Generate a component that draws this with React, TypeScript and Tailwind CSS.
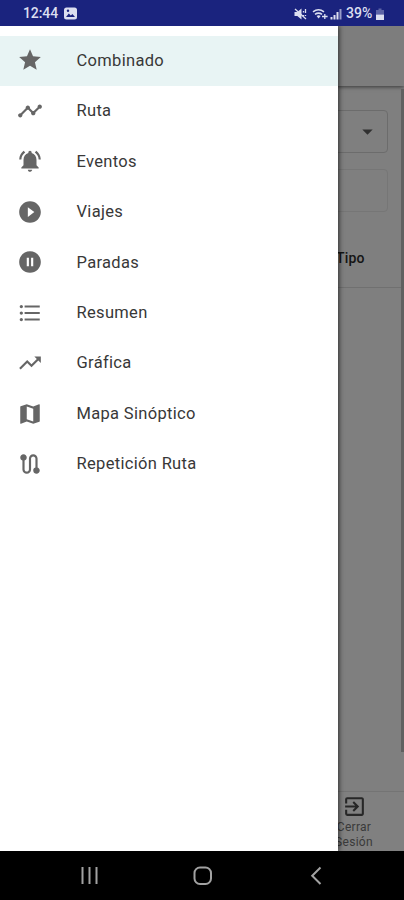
import type { IconType } from "react-icons";
import {
  MdArrowDropDown,
  MdExitToApp,
  MdFormatListBulleted,
  MdMap,
  MdNotificationsActive,
  MdPauseCircleFilled,
  MdPlayCircleFilled,
  MdRoute,
  MdStar,
  MdTimeline,
  MdTrendingUp
} from "react-icons/md";
import clsx from "clsx";

const MENU_ITEMS: { label: string; icon: IconType; selected?: boolean }[] = [
  { label: "Combinado", icon: MdStar, selected: true },
  { label: "Ruta", icon: MdTimeline },
  { label: "Eventos", icon: MdNotificationsActive },
  { label: "Viajes", icon: MdPlayCircleFilled },
  { label: "Paradas", icon: MdPauseCircleFilled },
  { label: "Resumen", icon: MdFormatListBulleted },
  { label: "Gráfica", icon: MdTrendingUp },
  { label: "Mapa Sinóptico", icon: MdMap },
  { label: "Repetición Ruta", icon: MdRoute }
];

function StatusBar() {
  return (
    <header className="flex h-[26px] shrink-0 items-center bg-[#1a237e] pt-px pr-[20.5px] pl-[23px] text-[14px] font-medium text-[#dcdff0]">
      <span className="tracking-[-0.1px]">12:44</span>
      <svg className="ml-[6px] h-[13px] w-[13px]" viewBox="0 0 13 13">
        <rect width="13" height="12" y="0.5" rx="2.5" fill="currentColor" />
        <path d="M2 10l2.8-3.6 2 2.2 1.6-1.5L11 10z" fill="#1a237e" />
        <circle cx="4" cy="3.8" r="1.2" fill="#1a237e" />
      </svg>
      <div className="ml-auto flex items-center">
        <svg className="h-[14px] w-[13px]" viewBox="0 0 13 14">
          <path d="M0.5 5h2.8L7.5 1.5v11L3.3 9H0.5z" fill="currentColor" />
          <path d="M1 2l11 10M9.5 4v1.5M11.5 2v4M9.5 8v1M11.5 8v1" fill="none" stroke="currentColor" strokeWidth="1.3" />
        </svg>
        <svg className="ml-[5px] h-[14px] w-[16px]" viewBox="0 0 16 14">
          <path d="M1 4.8q5.5-4 11 0M3 7.4q3.5-2.6 7 0" fill="none" stroke="currentColor" strokeWidth="1.6" />
          <path d="M4.6 9q2-1.3 4 0L6.6 11.6z" fill="currentColor" />
          <path d="M10 9.5h5.6M12.8 7v5" stroke="currentColor" strokeWidth="1.3" />
        </svg>
        <svg className="ml-[2px] h-[12px] w-[12px]" viewBox="0 0 12 12">
          <path d="M0.5 9h2v2.5h-2zM3.5 7h2v4.5h-2zM6.5 4h2v7.5h-2z" fill="currentColor" />
          <path d="M9.5 1h2v10.5h-2z" fill="currentColor" opacity="0.65" />
        </svg>
        <span className="ml-[4px] tracking-[0.1px]">39%</span>
        <svg className="ml-[3px] h-[12px] w-[8px]" viewBox="0 0 8 12">
          <path d="M2.5 0.5h3V2H8v4.5H0V2h2.5z" fill="currentColor" opacity="0.35" />
          <path d="M0 6.5h8V12H0z" fill="currentColor" />
        </svg>
      </div>
    </header>
  );
}

function ReportPage() {
  return (
    <div className="flex h-full flex-col bg-[#7f7f7f]">
      <div className="h-[60px] shrink-0 bg-[#7d7d7d] shadow-[0_1px_4px_rgba(0,0,0,0.55)]" />
      <div className="flex min-h-0 flex-1">
        <div className="flex-1">
          <div className="mt-[24px] mr-[13px] ml-4 flex h-[43px] items-center justify-end rounded-[4px] border border-[#6c6c6c] pr-[7px]">
            <MdArrowDropDown className="h-[25px] w-[25px] text-[#303030]" />
          </div>
          <div className="mt-[16px] mr-[13px] ml-4 h-[43px] rounded-[4px] border border-[#767676]" />
          <div className="flex h-[76px] items-center border-b border-[#707070] pt-[17px] pl-[336px] text-[14px] font-medium tracking-[0.2px] text-[#141414]">
            Tipo
          </div>
        </div>
        <div className="w-[3px] pt-[3px]">
          <div className="h-[663px] bg-[#606060]" />
        </div>
      </div>
      <div className="flex h-[60px] shrink-0 justify-end border-t border-[#747474] bg-[#808080]">
        <div className="flex w-[100px] flex-col items-center pt-[2px] text-center text-[12px] leading-[15px] tracking-[0.3px] text-[#3a3a3a]">
          <MdExitToApp className="mb-px h-[25px] w-[25px] shrink-0 text-[#272727]" />
          <span>
            Cerrar
            <br />
            Sesión
          </span>
        </div>
      </div>
    </div>
  );
}

function Drawer() {
  return (
    <nav className="absolute inset-y-0 left-0 w-[337.5px] bg-white pt-[10px] shadow-[1px_0_5px_rgba(0,0,0,0.65)]">
      {MENU_ITEMS.map(({ label, icon: Icon, selected }) => (
        <div key={label} className={clsx("flex h-[50.45px] items-center pl-[17px]", selected && "bg-[#e8f4f4]")}>
          <Icon className="mb-[1.5px] h-[26px] w-[26px] text-[#666666]" />
          <span className="ml-[33.5px] text-[16.5px] tracking-[0.32px] text-[#383838]">{label}</span>
        </div>
      ))}
    </nav>
  );
}

function NavigationBar() {
  return (
    <footer className="h-[49px] shrink-0 bg-black">
      <svg className="h-[49px] w-[404px]" viewBox="0 0 404 49" fill="none" stroke="#a2a2a2" strokeWidth="2">
        <path d="M82.5 16v17M89.5 16v17M96.5 16v17" />
        <rect x="194.5" y="16.5" width="16.5" height="16.5" rx="5.5" />
        <path d="M320.5 16.5l-8.3 8.2 8.3 8.3" />
      </svg>
    </footer>
  );
}

export default function App() {
  return (
    <div className="flex h-[900px] w-[404px] flex-col overflow-hidden font-[Roboto,sans-serif]">
      <StatusBar />
      <main className="relative min-h-0 flex-1 overflow-hidden">
        <ReportPage />
        <Drawer />
      </main>
      <NavigationBar />
    </div>
  );
}
